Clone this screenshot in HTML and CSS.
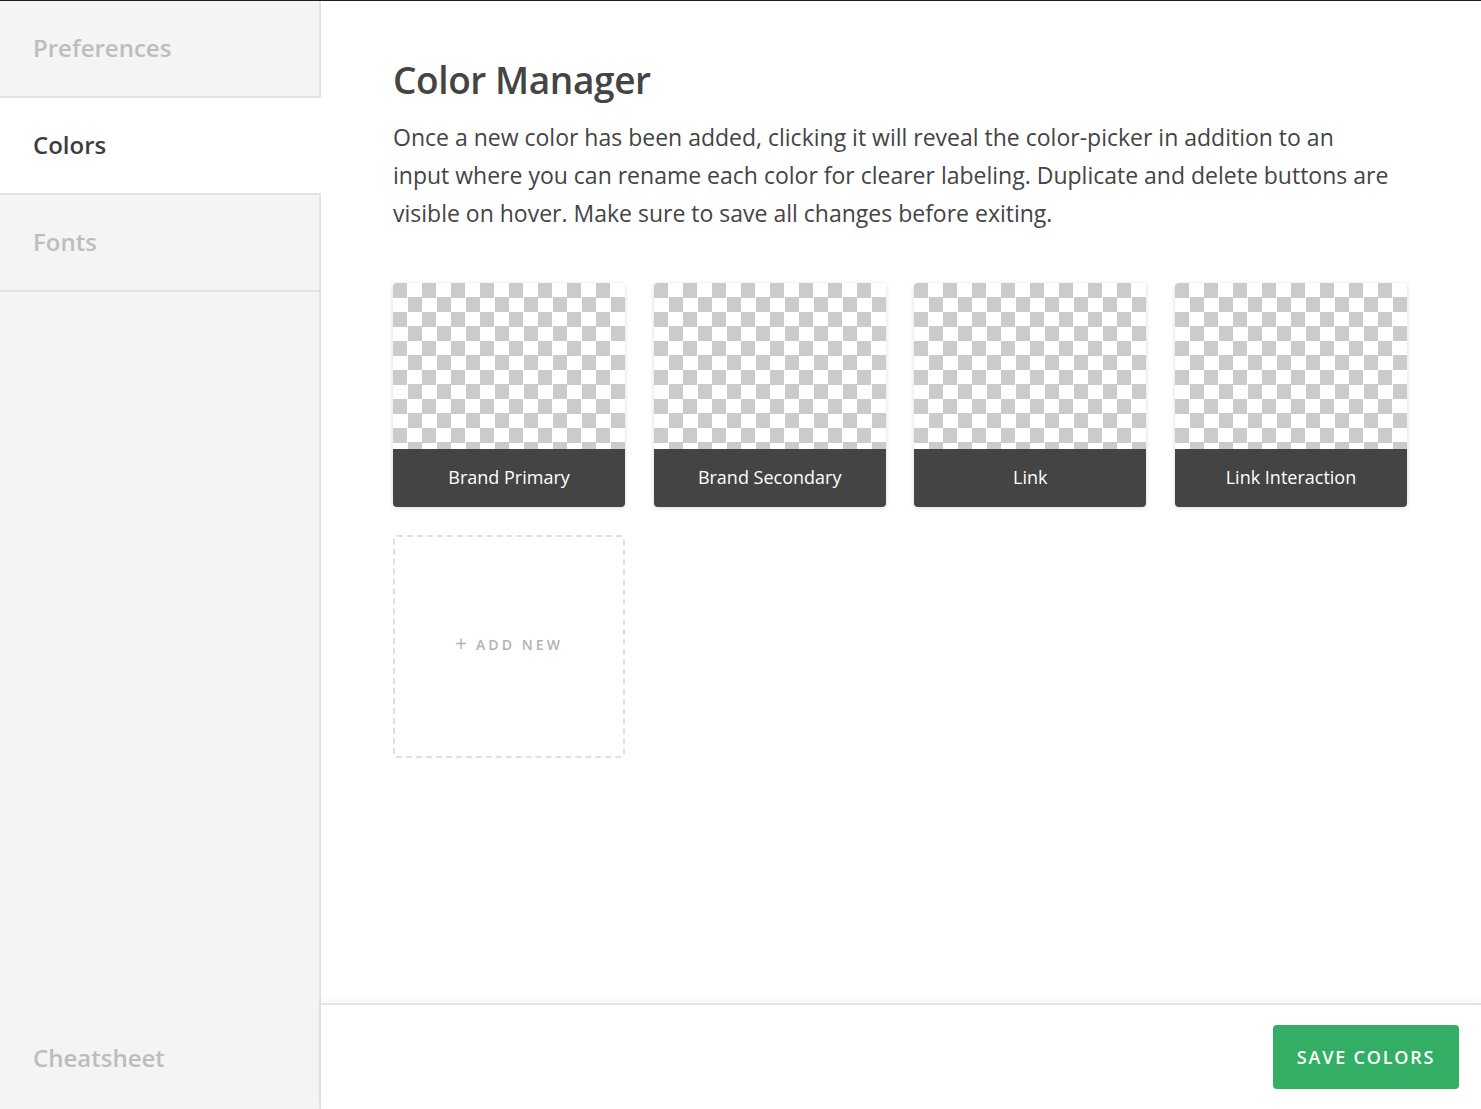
FILE: index.html
```html
<!DOCTYPE html>
<html lang="en">
<head>
<meta charset="utf-8">
<title>Color Manager</title>
<link rel="stylesheet" href="styles.css">
</head>
<body>
<div class="app">
  <nav class="sidebar">
    <a class="nav-item">Preferences</a>
    <a class="nav-item active">Colors</a>
    <a class="nav-item">Fonts</a>
    <div class="nav-spacer"></div>
    <a class="nav-item bottom">Cheatsheet</a>
  </nav>
  <main class="main">
    <section class="content">
      <h1 class="title">Color Manager</h1>
      <p class="intro">Once a new color has been added, clicking it will reveal the color-picker in addition to an<br>input where you can rename each color for clearer labeling. Duplicate and delete buttons are visible on hover. Make sure to save all changes before exiting.</p>
      <div class="grid">
        <div class="card"><div class="swatch"></div><div class="label">Brand Primary</div></div>
        <div class="card"><div class="swatch"></div><div class="label">Brand Secondary</div></div>
        <div class="card"><div class="swatch"></div><div class="label">Link</div></div>
        <div class="card"><div class="swatch"></div><div class="label">Link Interaction</div></div>
        <div class="add-new"><span class="plus">+</span>ADD NEW</div>
      </div>
    </section>
    <footer class="footer">
      <button class="save">SAVE COLORS</button>
    </footer>
  </main>
</div>
</body>
</html>
```

FILE: styles.css
```css
* { box-sizing: border-box; }
html, body {
  margin: 0;
  height: 100%;
}
body {
  font-family: "Open Sans", "Noto Sans", sans-serif;
  color: #444;
  background: #fff;
}
.app {
  display: flex;
  height: 100vh;
  border-top: 1px solid #1e1e1e;
}
.sidebar {
  width: 321px;
  flex: 0 0 321px;
  background: #f4f4f4;
  border-right: 2px solid #e2e2e2;
  display: flex;
  flex-direction: column;
}
.nav-item {
  display: flex;
  align-items: center;
  height: 97px;
  padding-left: 33px;
  padding-bottom: 2px;
  font-size: 24px;
  font-weight: 600;
  color: #bdbdbd;
  border-bottom: 2px solid #e2e2e2;
  cursor: pointer;
}
.nav-item.active {
  background: #fff;
  color: #3d3d3d;
  margin-right: -2px;
}
.nav-spacer { flex: 1; }
.nav-item.bottom {
  border-bottom: none;
  height: 102px;
}
.main {
  flex: 1;
  display: flex;
  flex-direction: column;
  min-width: 0;
}
.content {
  flex: 1;
  padding: 57px 74px 0 72px;
}
.title {
  margin: 0;
  font-size: 37px;
  line-height: 44px;
  font-weight: 600;
  color: #444;
  letter-spacing: -0.4px;
}
.intro {
  margin: 16px 0 0;
  font-size: 23px;
  line-height: 38px;
  color: #444;
}
.grid {
  margin-top: 51px;
  display: grid;
  grid-template-columns: repeat(4, 1fr);
  column-gap: 28.6px;
  row-gap: 28px;
}
.card {
  height: 224px;
  border-radius: 4px;
  overflow: hidden;
  box-shadow: 0 1px 4px rgba(0,0,0,0.16);
  display: flex;
  flex-direction: column;
}
.swatch {
  flex: 1;
  background-color: #fff;
  background-image: conic-gradient(#fff 25%, #cbcbcb 0 50%, #fff 0 75%, #cbcbcb 0);
  background-size: 29px 29px;
}
.label {
  height: 58px;
  padding-bottom: 3px;
  background: #444;
  color: #fff;
  font-size: 18px;
  display: flex;
  align-items: center;
  justify-content: center;
}
.add-new {
  height: 223px;
  border: 2px dashed #e0e0e0;
  border-radius: 4px;
  display: flex;
  align-items: center;
  justify-content: center;
  padding-bottom: 4px;
  font-size: 14px;
  font-weight: 600;
  letter-spacing: 3.1px;
  color: #b3b3b3;
}
.plus {
  font-size: 21px;
  font-weight: 400;
  margin-right: 9px;
  letter-spacing: 0;
  line-height: 1;
  position: relative;
  top: -1px;
}
.footer {
  height: 106px;
  flex: 0 0 106px;
  border-top: 2px solid #e4e4e4;
  box-shadow: 0 -3px 8px rgba(0,0,0,0.04);
  display: flex;
  justify-content: flex-end;
  align-items: flex-start;
  padding: 20px 22px 0 0;
}
.save {
  height: 64px;
  width: 186px;
  border: none;
  border-radius: 4px;
  background: #33ae65;
  color: #fff;
  font-family: "Open Sans", "Noto Sans", sans-serif;
  font-size: 18px;
  font-weight: 600;
  letter-spacing: 1.8px;
  cursor: pointer;
}
```
